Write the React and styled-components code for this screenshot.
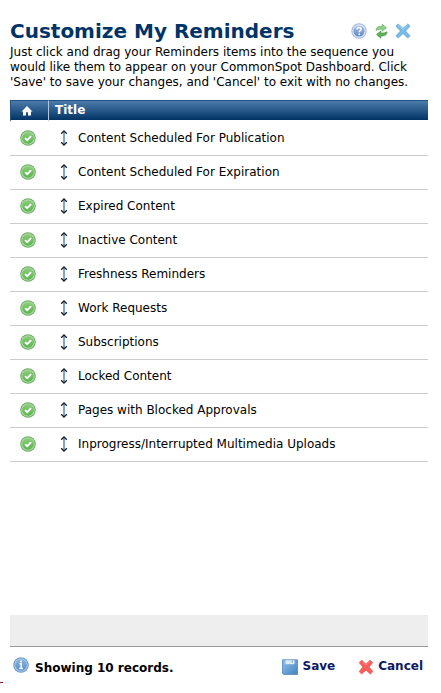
import React from "react";
import styled, { createGlobalStyle } from "styled-components";

const reminders = [
  "Content Scheduled For Publication",
  "Content Scheduled For Expiration",
  "Expired Content",
  "Inactive Content",
  "Freshness Reminders",
  "Work Requests",
  "Subscriptions",
  "Locked Content",
  "Pages with Blocked Approvals",
  "Inprogress/Interrupted Multimedia Uploads",
];

function HelpIcon() {
  return (
    <svg width="16" height="16" viewBox="0 0 16 16">
      <defs>
        <linearGradient id="help" x1="0" y1="0" x2="0" y2="1">
          <stop offset="0" stopColor="#a9c4ea" />
          <stop offset="1" stopColor="#5d86c6" />
        </linearGradient>
      </defs>
      <circle cx="8" cy="8" r="7.7" fill="#a3b8d9" />
      <circle cx="8" cy="8" r="6.7" fill="#dfe9f7" />
      <circle cx="8" cy="8" r="5.6" fill="url(#help)" />
      <path
        d="M6 6.6C6 5.2 6.9 4.5 8.1 4.5s2 .8 2 1.8C10.1 7.7 8.2 7.6 8.2 9.3"
        fill="none"
        stroke="#fff"
        strokeWidth="1.5"
      />
      <circle cx="8.2" cy="11.3" r="1" fill="#fff" />
    </svg>
  );
}

function RefreshIcon() {
  return (
    <svg width="16" height="16" viewBox="0 0 16 16">
      <path
        d="M3 7.4C3 4.8 4.6 3.4 7.2 3.4h2V1.2l4.2 3.6-4.2 3.4V6.2h-2C5.4 6.2 4.6 6.6 3 7.4z"
        fill="#8fd088"
        stroke="#62b05e"
        strokeWidth="0.7"
      />
      <path
        d="M14 8.8c0 2.7-1.6 4.1-4.2 4.1h-2v2.3l-4.2-3.7 4.2-3.4v2h2c1.8 0 2.6-.5 4.2-1.3z"
        fill="#62b15d"
        stroke="#43923f"
        strokeWidth="0.7"
      />
    </svg>
  );
}

function CloseIcon() {
  return (
    <svg width="16" height="16" viewBox="0 0 16 16">
      <path
        d="M3.2 1 8 5.4 12.8 1 15 3.2 10.5 8l4.5 4.8-2.2 2.2L8 10.6 3.2 15 1 12.8 5.5 8 1 3.2z"
        fill="#78bbe5"
        stroke="#67abd9"
        strokeWidth="0.9"
        strokeLinejoin="round"
      />
      <path d="M3.2 2 8 6.5 12.8 2" fill="none" stroke="#9fd3f1" />
    </svg>
  );
}

function HomeIcon() {
  return (
    <svg width="12" height="10" viewBox="0 0 12 10">
      <path d="M6 0 0.5 5.4H2V9.5h3V6.3h2v3.2h3V5.4h1.5z" fill="#fff" />
    </svg>
  );
}

function CheckIcon() {
  return (
    <svg width="16" height="16" viewBox="0 0 16 16">
      <defs>
        <linearGradient id="check" x1="0" y1="0" x2="0" y2="1">
          <stop offset="0" stopColor="#8ecb7c" />
          <stop offset="1" stopColor="#5cb450" />
        </linearGradient>
      </defs>
      <circle cx="8" cy="8" r="7.8" fill="#69ad60" />
      <circle cx="8" cy="8" r="6.8" fill="#b0dba5" />
      <circle cx="8" cy="8" r="5.8" fill="url(#check)" />
      <path d="m5 8.1 2.2 2.1 3.9-4.1" fill="none" stroke="#fff" strokeWidth="1.8" />
    </svg>
  );
}

function DragIcon() {
  return (
    <svg width="8" height="16" viewBox="0 0 8 16">
      <path d="M4 2v12" stroke="#3c78ad" strokeWidth="1.3" />
      <path
        d="M1.2 3.8 4 1l2.8 2.8M1.2 12.2 4 15l2.8-2.8"
        fill="none"
        stroke="#15202c"
        strokeWidth="1.3"
      />
    </svg>
  );
}

function InfoIcon() {
  return (
    <svg width="16" height="16" viewBox="0 0 16 16">
      <defs>
        <linearGradient id="info" x1="0" y1="0" x2="0" y2="1">
          <stop offset="0" stopColor="#8ab4de" />
          <stop offset="1" stopColor="#5a91ca" />
        </linearGradient>
      </defs>
      <circle cx="8" cy="8" r="7.8" fill="#6c9ccd" />
      <circle cx="8" cy="8" r="6.8" fill="#a9c9e9" />
      <circle cx="8" cy="8" r="5.8" fill="url(#info)" />
      <path d="M6.5 6.7H8.2v4.6M6.3 11.5h3.6" fill="none" stroke="#fff" strokeWidth="1.4" />
      <circle cx="8" cy="4.5" r="1" fill="#fff" />
    </svg>
  );
}

function SaveIcon() {
  return (
    <svg width="16" height="16" viewBox="0 0 16 16">
      <defs>
        <linearGradient id="save" x1="0" y1="0" x2="1" y2="1">
          <stop offset="0" stopColor="#8fc0ee" />
          <stop offset="1" stopColor="#4482bf" />
        </linearGradient>
      </defs>
      <path d="M.5.8h15v14.7H1.5l-1-1z" fill="url(#save)" stroke="#5585b5" strokeWidth="0.8" />
      <path d="M3.5 1.2h9v4h-9z" fill="#dcebfa" />
      <path d="M9.5 1.5h1.5v2H9.5z" fill="#8bb5dd" />
    </svg>
  );
}

function CancelIcon() {
  return (
    <svg width="16" height="16" viewBox="0 0 16 16">
      <path
        d="M3.8 1.3 8 5.2 12 1.3l2.7 2.3L11 8l3.8 4.6-2.5 2.3L8 11l-4.4 3.9-2.4-2.3L5 8 1.3 3.7z"
        fill="#f95c59"
        stroke="#f05c58"
        strokeWidth="0.9"
        strokeLinejoin="round"
      />
      <path d="M3.8 2.3 8 6.4l4-4.1" fill="none" stroke="#ff8c86" />
    </svg>
  );
}

function App() {
  return (
    <>
      <GlobalStyle />
      <Dialog>
        <Header>
          <h1>Customize My Reminders</h1>
          <Tools>
            <IconButton aria-label="Help">
              <HelpIcon />
            </IconButton>
            <IconButton aria-label="Refresh">
              <RefreshIcon />
            </IconButton>
            <IconButton aria-label="Close">
              <CloseIcon />
            </IconButton>
          </Tools>
        </Header>
        <Intro>
          Just click and drag your Reminders items into the sequence you would
          like them to appear on your CommonSpot Dashboard. Click 'Save' to save
          your changes, and 'Cancel' to exit with no changes.
        </Intro>

        <Table>
          <thead>
            <tr>
              <th className="status" aria-label="Shown on dashboard">
                <HomeIcon />
              </th>
              <th colSpan={2}>Title</th>
            </tr>
          </thead>
          <tbody>
            {reminders.map((title) => (
              <tr key={title}>
                <td className="status">
                  <CheckIcon />
                </td>
                <td className="drag">
                  <DragIcon />
                </td>
                <td>{title}</td>
              </tr>
            ))}
          </tbody>
        </Table>

        <Bar />
        <Footer>
          <Status>
            <InfoIcon />
            <span>Showing {reminders.length} records.</span>
          </Status>
          <Actions>
            <ActionButton>
              <SaveIcon />
              Save
            </ActionButton>
            <ActionButton>
              <CancelIcon />
              Cancel
            </ActionButton>
          </Actions>
        </Footer>
        <Marker />
      </Dialog>
    </>
  );
}

export default App;

const GlobalStyle = createGlobalStyle`
  * {
    box-sizing: border-box;
  }
  body {
    margin: 0;
    background: #fff;
    color: #000;
    font-family: Verdana, "DejaVu Sans", sans-serif;
    font-size: 12px;
    line-height: 15px;
  }
  svg {
    display: block;
    flex: none;
  }
`;

const Dialog = styled.div`
  position: relative;
  display: flex;
  flex-direction: column;
  min-height: 100vh;
  padding: 18px 13px 17px 10px;
`;

const Header = styled.header`
  display: flex;
  justify-content: space-between;
  align-items: center;
  padding-right: 17px;
  h1 {
    margin: 0;
    color: #003466;
    font-size: 20px;
    line-height: 26px;
    white-space: nowrap;
  }
`;

const Tools = styled.div`
  display: flex;
  gap: 6px;
`;

const IconButton = styled.button`
  padding: 0;
  border: none;
  background: none;
  cursor: pointer;
`;

const Intro = styled.p`
  margin: 1px 0 10px;
`;

const Table = styled.table`
  width: 100%;
  border-collapse: separate;
  border-spacing: 0;
  th {
    height: 22px;
    padding: 0 6px;
    border-top: 1px solid #24507f;
    border-left: 1px solid #b5c6d8;
    border-bottom: 2px solid #fff;
    background: linear-gradient(#4b7cab, #023365) padding-box;
    color: #fff;
    text-align: left;
  }
  .status {
    width: 38px;
    padding: 0 0 0 10px;
  }
  th.status {
    border-left-color: #24507f;
  }
  td {
    height: 34px;
    padding: 0;
    border-bottom: 1px solid #ccc;
  }
  td.status,
  td.drag {
    padding-bottom: 2px;
  }
  .drag {
    width: 30px;
    padding-left: 12px;
  }
`;

const Bar = styled.div`
  height: 32px;
  margin-top: auto;
  border-bottom: 1px solid #999;
  background: #eee;
`;

const Footer = styled.footer`
  display: flex;
  justify-content: space-between;
  padding: 10px 5px 0 3px;
`;

const Status = styled.div`
  display: flex;
  gap: 6px;
  font-weight: bold;
  span {
    padding-top: 4px;
  }
`;

const Actions = styled.div`
  display: flex;
  align-items: center;
  gap: 23px;
`;

const ActionButton = styled.button`
  display: flex;
  align-items: center;
  gap: 4px;
  padding: 0;
  border: none;
  background: none;
  color: #0d1a63;
  font: inherit;
  font-weight: bold;
  cursor: pointer;
`;

const Marker = styled.i`
  position: absolute;
  bottom: 10px;
  left: 0;
  width: 3px;
  height: 1px;
  background: linear-gradient(90deg, #f00 50%, #00f 50%);
`;
